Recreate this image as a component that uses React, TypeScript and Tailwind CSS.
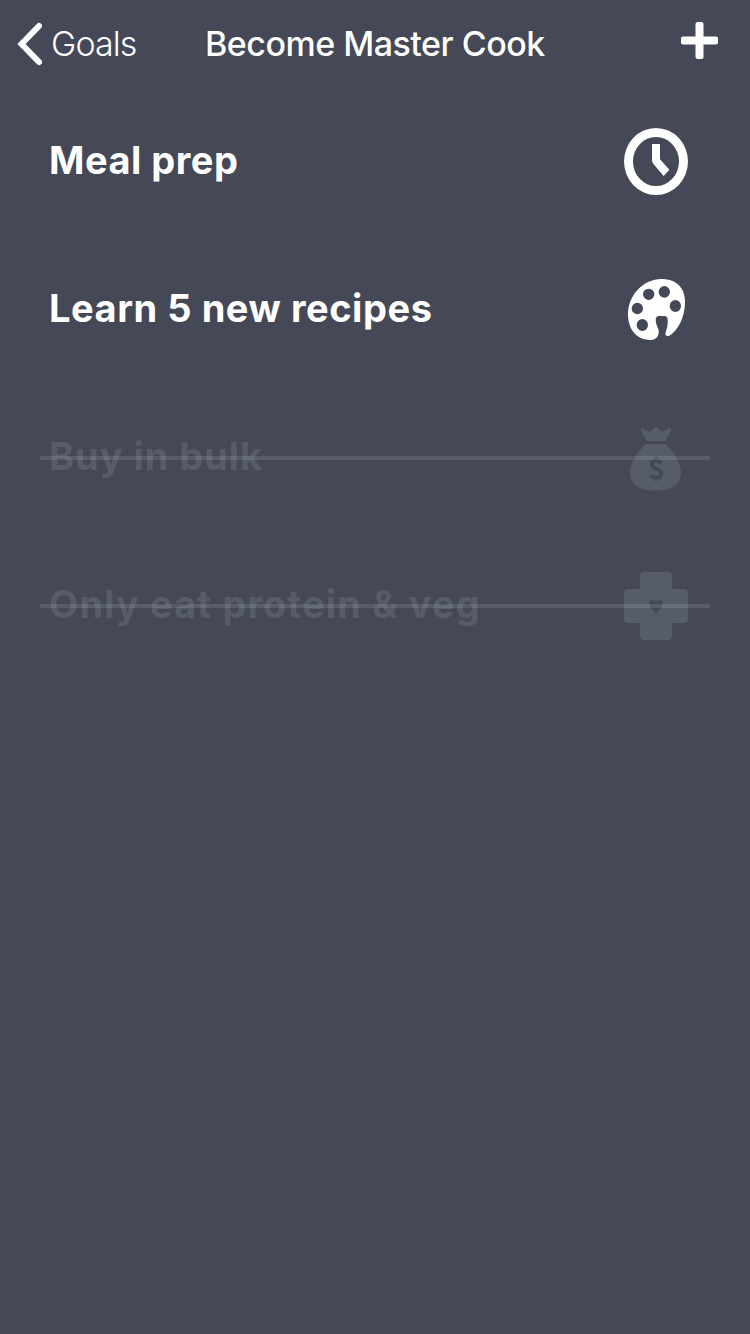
import type { ReactNode } from "react";

type Goal = { title: string; done: boolean; tracking: string; icon: ReactNode };

const ClockIcon = () => (
  <svg className="h-[90px] w-[92px]" viewBox="0 6 276 270" fill="currentColor">
    <path
      fillRule="evenodd"
      d="M138 39A96 100.5 0 0 1 138 240A96 100.5 0 0 1 138 39ZM138 66A69 73.5 0 0 0 138 213A69 73.5 0 0 0 138 66Z"
    />
    <path d="M126 87H150V133L178 164L161 183L131 148Q126 142 126 136Z" />
  </svg>
);

const PaletteIcon = () => (
  <svg className="h-[90px] w-[92px]" viewBox="0 0 276 270" fill="currentColor">
    <path
      fillRule="evenodd"
      d="M154 42C198 42 225 67 225 110C225 157 204 196 178 212Q172 215 166 210C166 201 172 190 173 178C174 164 174 153 164 153H147C136 153 136 165 139 176C142 188 148 193 146 204C144 216 136 225 122 225C82 225 54 196 54 148C54 91 100 42 154 42ZM116 71A17 17 0 1 0 116 105A17 17 0 1 0 116 71ZM163 63A17 17.5 0 1 0 163 98A17 17.5 0 1 0 163 63ZM82 113A17 17.5 0 1 0 82 148A17 17.5 0 1 0 82 113ZM196 105A17 18 0 1 0 196 141A17 18 0 1 0 196 105ZM97 162A17 18 0 1 0 97 198A17 18 0 1 0 97 162Z"
    />
  </svg>
);

const MoneyBagIcon = () => (
  <svg className="h-[90px] w-[92px]" viewBox="0 -6 276 270">
    <mask id="bag-mask" maskUnits="userSpaceOnUse" x="0" y="-6" width="276" height="270">
      <rect x="0" y="-6" width="276" height="270" fill="white" />
      <path
        d="M154 144C150 140 145 138 139 138C129 138 125 142 125 148C125 156 131 158 139 161C148 164 153 168 153 176C153 184 148 187 138 187C131 187 126 185 121 181"
        fill="none"
        stroke="black"
        strokeWidth="12"
      />
      <path d="M138 126V139M138 187V199" fill="none" stroke="black" strokeWidth="8" />
    </mask>
    <g fill="currentColor" mask="url(#bag-mask)">
      <path d="M109 78C107 65 96 55 93 44Q92 38 98 41L120 51L134 38Q138 34 142 38L156 51L178 40Q184 38 183 44C180 56 169 65 167 78Z" />
      <path d="M107 87H168C184 105 213 134 213 175C213 210 185 227 137 227C88 227 60 210 60 175C60 134 90 105 107 87Z" />
    </g>
  </svg>
);

const HealthIcon = () => (
  <svg className="h-[90px] w-[92px]" viewBox="0 3 276 270" fill="currentColor">
    <path
      fillRule="evenodd"
      d="M102 36H174Q186 36 186 48V87H222Q234 87 234 99V177Q234 189 222 189H186V228Q186 240 174 240H102Q90 240 90 228V189H54Q42 189 42 177V99Q42 87 54 87H90V48Q90 36 102 36ZM138 126Q134 120 127 120Q117 121 117 132Q117 139 123 145L138 160L153 145Q159 139 159 132Q159 121 149 120Q142 120 138 126Z"
    />
  </svg>
);

const goals: Goal[] = [
  { title: "Meal prep", done: false, tracking: "tracking-[0.5px]", icon: <ClockIcon /> },
  { title: "Learn 5 new recipes", done: false, tracking: "tracking-[0.55px]", icon: <PaletteIcon /> },
  { title: "Buy in bulk", done: true, tracking: "tracking-[0.95px]", icon: <MoneyBagIcon /> },
  { title: "Only eat protein & veg", done: true, tracking: "tracking-[1.1px]", icon: <HealthIcon /> },
];

function GoalRow({ goal }: { goal: Goal }) {
  return (
    <li className="relative h-[148px]">
      <div
        className={`flex h-full items-center justify-between pr-12 pl-[49px] ${goal.done ? "text-[#dcf0e6] opacity-12" : ""}`}
      >
        <span className={`pb-1 text-[38px] leading-[44px] font-bold whitespace-nowrap ${goal.tracking}`}>
          {goal.title}
        </span>
        {goal.icon}
      </div>
      {goal.done && <div className="absolute inset-x-10 top-[72px] h-1 bg-[#dcf0e6]/12" />}
    </li>
  );
}

export default function App() {
  return (
    <main className="min-h-[1334px] w-[750px] bg-[#454856] font-['Inter','Liberation_Sans',sans-serif] text-white">
      <header className="grid h-[88px] grid-cols-[205px_1fr_70px] items-center">
        <button className="flex items-center gap-[9px] pl-[17px]">
          <svg className="h-[44px] w-[25px]" viewBox="0 0 25 44" fill="none" stroke="white" strokeWidth="6">
            <path d="M22 4L4.5 22L22 40" strokeLinecap="round" />
          </svg>
          <span className="text-[34px] leading-[44px] font-[350] tracking-[-0.9px]">Goals</span>
        </button>
        <h1 className="text-[34px] leading-[44px] font-[550] tracking-[-0.5px] whitespace-nowrap">
          Become Master Cook
        </h1>
        <button aria-label="Add goal" className="mb-[6px]">
          <svg className="h-[38px] w-[38px]" viewBox="0 0 38 38" fill="white">
            <rect x="1" y="14.5" width="37" height="8" rx="2" />
            <rect x="15.5" y="0" width="8" height="37" rx="2" />
          </svg>
        </button>
      </header>
      <ul>
        {goals.map((goal) => (
          <GoalRow key={goal.title} goal={goal} />
        ))}
      </ul>
    </main>
  );
}
